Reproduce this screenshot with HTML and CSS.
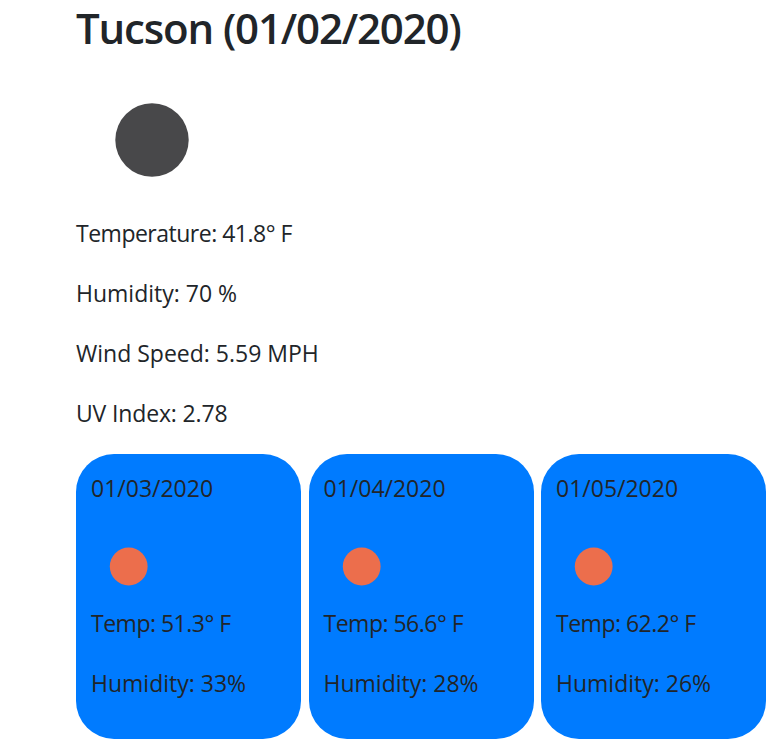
FILE: index.html
```html
<!DOCTYPE html>
<html lang="en">
<head>
<meta charset="utf-8">
<title>Weather</title>
<link rel="stylesheet" href="styles.css">
</head>
<body>
<main class="weather">
  <h1>Tucson (01/02/2020)</h1>
  <svg class="icon-lg" viewBox="0 0 150 150"><circle cx="76" cy="75" r="36.7"/></svg>
  <p class="temperature">Temperature: 41.8° F</p>
  <p>Humidity: 70 %</p>
  <p>Wind Speed: 5.59 MPH</p>
  <p class="uv">UV Index: 2.78</p>
  <section class="forecast">
    <article class="card">
      <p class="date">01/03/2020</p>
      <svg class="icon-sm" viewBox="0 0 75 75"><circle cx="37.7" cy="37.5" r="18.9"/></svg>
      <p class="temperature">Temp: 51.3° F</p>
      <p>Humidity: 33%</p>
    </article>
    <article class="card">
      <p class="date">01/04/2020</p>
      <svg class="icon-sm" viewBox="0 0 75 75"><circle cx="37.7" cy="37.5" r="18.9"/></svg>
      <p class="temperature">Temp: 56.6° F</p>
      <p>Humidity: 28%</p>
    </article>
    <article class="card">
      <p class="date">01/05/2020</p>
      <svg class="icon-sm" viewBox="0 0 75 75"><circle cx="37.7" cy="37.5" r="18.9"/></svg>
      <p class="temperature">Temp: 62.2° F</p>
      <p>Humidity: 26%</p>
    </article>
  </section>
</main>
</body>
</html>
```
FILE: styles.css
```css
* { box-sizing: border-box; }
body {
  margin: 0;
  background: #fff;
  color: #212529;
  font-family: "Open Sans", "Noto Sans", sans-serif;
  font-size: 23px;
  font-weight: 400;
  line-height: 36px;
  overflow: hidden;
}
.weather { width: 690px; margin-left: 76px; padding-top: 4px; }
h1 { margin: 0 0 13px; font-size: 42px; font-weight: 600; line-height: 48px; letter-spacing: -1.15px; white-space: nowrap; }
p { margin: 0 0 24px; white-space: nowrap; }
.temperature { letter-spacing: -0.5px; }
.uv { letter-spacing: -0.15px; }
.icon-lg { display: block; width: 150px; height: 150px; fill: #48484a; }
.icon-sm { display: block; width: 75px; height: 75px; margin: 0 0 1px; fill: #ec6e4c; }
.forecast { display: grid; grid-template-columns: repeat(3, 225px); gap: 7.5px; margin-top: -1px; }
.card { height: 285px; padding: 16px 15px 0; border-radius: 38px; background: #007bff; }
.date { margin-bottom: 23px; }
```
